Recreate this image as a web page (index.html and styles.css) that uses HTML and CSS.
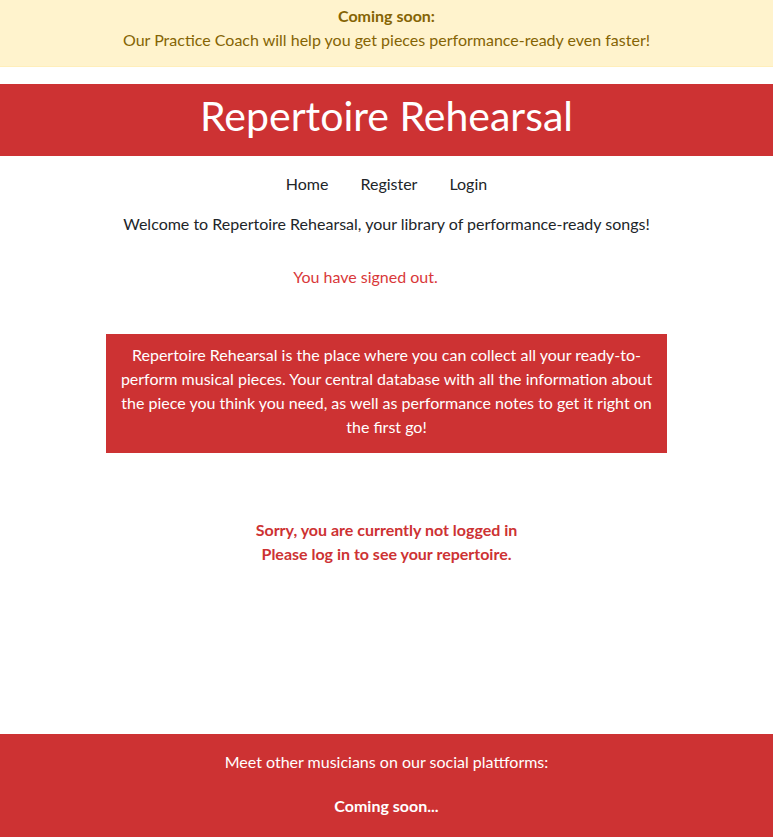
FILE: index.html
```html
<!DOCTYPE html>
<html lang="en">
<head>
<meta charset="utf-8">
<title>Repertoire Rehearsal</title>
<link rel="stylesheet" href="styles.css">
</head>
<body>
<div class="notice">
  <p class="notice-title">Coming soon:</p>
  <p class="notice-text">Our Practice Coach will help you get pieces performance-ready even faster!</p>
</div>
<header class="banner">
  <h1 class="brand">Repertoire Rehearsal</h1>
</header>
<nav class="nav">
  <a class="nav-link" href="#">Home</a>
  <a class="nav-link" href="#">Register</a>
  <a class="nav-link" href="#">Login</a>
</nav>
<main class="main">
  <p class="welcome">Welcome to Repertoire Rehearsal, your library of performance-ready songs!</p>
  <p class="flash">You have signed out.</p>
  <div class="intro">
    <p>Repertoire Rehearsal is the place where you can collect all your ready-to-perform musical pieces. Your central database with all the information about the piece you think you need, as well as performance notes to get it right on the first go!</p>
  </div>
  <p class="warning">Sorry, you are currently not logged in<br>Please log in to see your repertoire.</p>
</main>
<footer class="footer">
  <p class="footer-text">Meet other musicians on our social plattforms:</p>
  <p class="footer-soon">Coming soon...</p>
</footer>
</body>
</html>
```
FILE: styles.css
```css
* { box-sizing: border-box; }
html, body { margin: 0; padding: 0; }
body {
  font-family: Lato, "Open Sans", sans-serif;
  font-size: 16px;
  line-height: 24px;
  color: #212529;
  background: #fff;
  text-align: center;
  min-height: 837px;
  display: flex;
  flex-direction: column;
}
p { margin: 0; }

.notice {
  background: #fff3cd;
  color: #856404;
  border-bottom: 1px solid #ffeeba;
  padding: 4px 16px 14px;
  height: 67px;
}
.notice-title { font-weight: 700; }

.banner {
  margin-top: 17px;
  background: #cd3233;
  color: #fff;
  padding: 8px 0 16px;
}
.brand {
  margin: 0;
  font-size: 41px;
  line-height: 48px;
  font-weight: 400;
}

.nav {
  display: flex;
  justify-content: center;
  margin-top: 8px;
}
.nav-link {
  color: #212529;
  text-decoration: none;
  padding: 8px 16px;
}

.main { flex: 1; }
.welcome { margin-top: 8px; }
.flash { margin-top: 29px; padding-right: 42px; color: #d9383a; }

.intro {
  max-width: 561px;
  margin: 45px auto 0;
  background: #cd3233;
  color: #fff;
  padding: 9px 8px 14px;
}

.warning {
  margin-top: 65px;
  color: #cd3233;
  font-weight: 700;
}

.footer {
  margin-top: 168px;
  background: #cd3233;
  color: #fff;
  padding: 16px 0 19px;
}
.footer-soon { margin-top: 20px; font-weight: 700; }
```
